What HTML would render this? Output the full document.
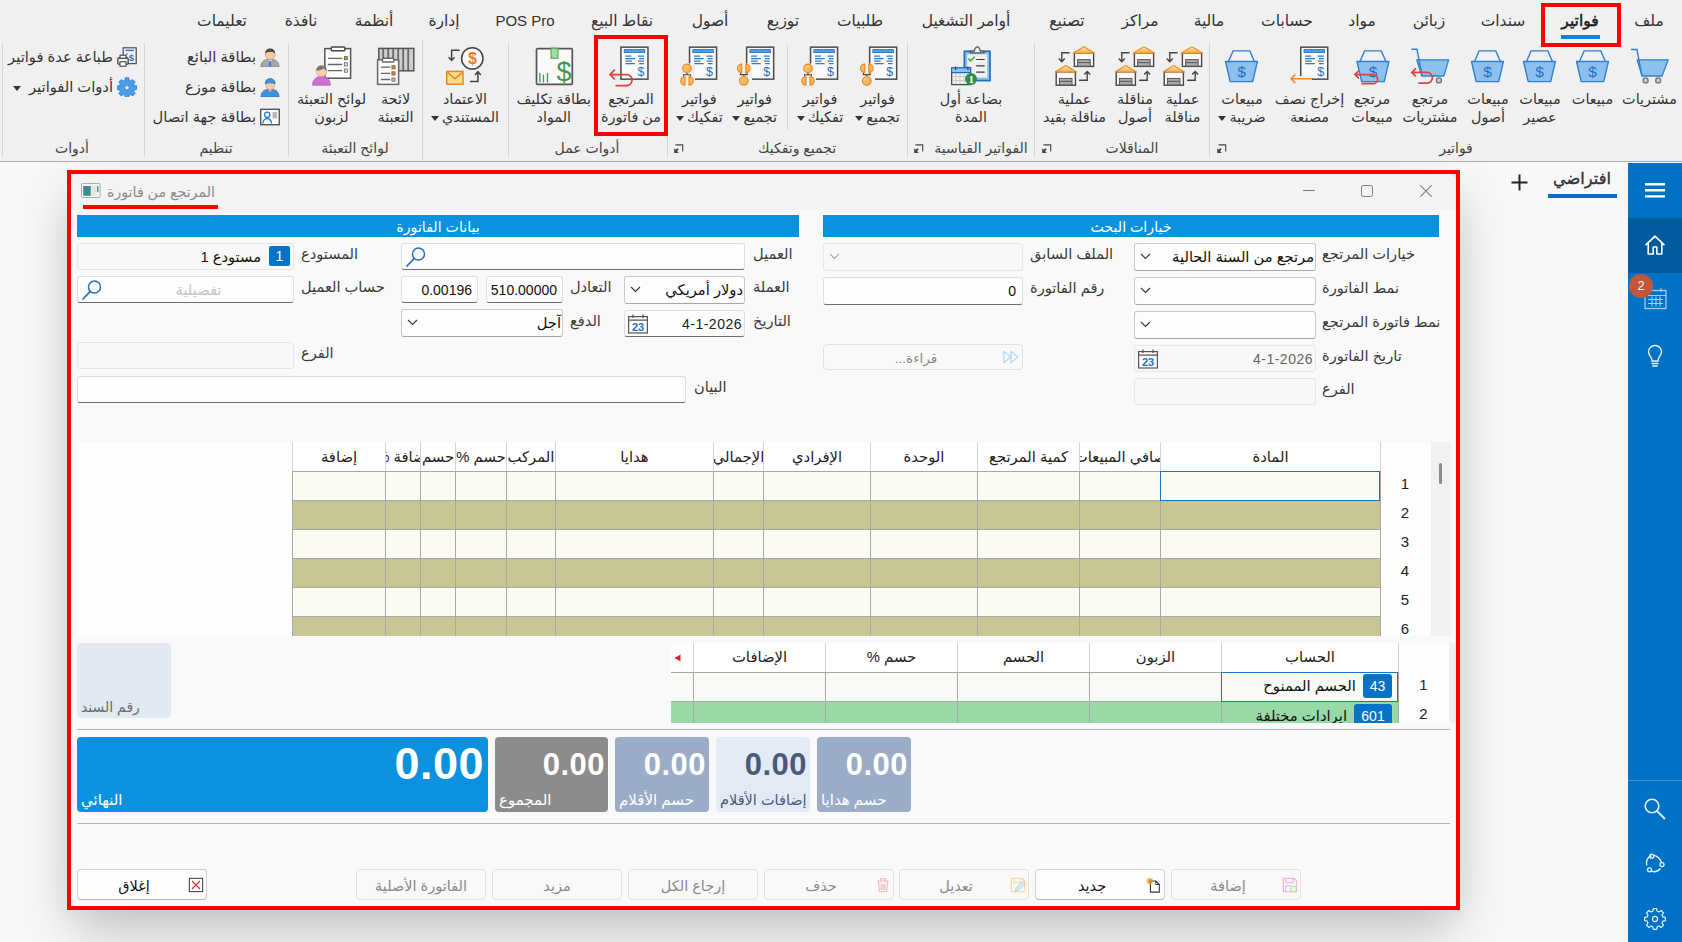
<!DOCTYPE html>
<html lang="ar">
<head>
<meta charset="utf-8">
<title>المرتجع من فاتورة</title>
<style>
*{box-sizing:border-box;margin:0;padding:0}
html,body{width:1682px;height:942px;overflow:hidden}
body{position:relative;background:#f8f8f8;font-family:"Liberation Sans","DejaVu Sans",sans-serif;font-size:14px;color:#2b2b2b}
.abs{position:absolute}
/* ===== ribbon ===== */
#ribbon{z-index:5;position:absolute;left:0;top:0;width:1682px;height:162px;background:#f0f0f0;border-bottom:1px solid #adadad}
.tab{position:absolute;top:10px;width:120px;margin-left:-60px;text-align:center;font-size:15.5px;line-height:22px;color:#333;white-space:nowrap}
.tab .lat{font-size:15px}
.tab.act{color:#1c1c1c;-webkit-text-stroke:.5px #1c1c1c}
#tabul{position:absolute;left:1561px;top:35px;width:39px;height:4px;background:#1b7fd6}
.redbox{z-index:2;position:absolute;border:4px solid #ff0000}
.gsep{position:absolute;top:43px;width:1px;height:114px;background:#d4d4d4}
.glabel{position:absolute;top:138px;width:160px;margin-left:-80px;text-align:center;font-size:14px;line-height:20px;color:#444;white-space:nowrap}
.launch{position:absolute;top:144px;width:10px;height:10px}
.big{position:absolute;top:46px;width:120px;margin-left:-60px;text-align:center;white-space:nowrap}
.big svg{display:block;margin:0 auto;width:40px;height:40px}
.big .l{display:block;font-size:14.400px;line-height:18px;color:#333;margin-top:0}
.big .l1{margin-top:4px}
.dd{display:inline-block;width:0;height:0;border-left:4px solid transparent;border-right:4px solid transparent;border-top:5px solid #333;vertical-align:middle;margin-right:3px}
.sm{position:absolute;height:24px;white-space:nowrap;font-size:14.700px;line-height:24px;color:#333;direction:rtl}
.sm svg{position:absolute;right:0;top:2px;width:20px;height:20px}
.sm span{position:absolute;right:24px;top:0px}
/* ===== sidebar ===== */
#side{z-index:5;position:absolute;left:1628px;top:163px;width:54px;height:779px;background:#0072c6}
#side .home{position:absolute;left:0;top:55px;width:54px;height:55px;background:#005a9e}
#side svg{position:absolute}
/* ===== dialog ===== */
#dlgred{position:absolute;left:67px;top:170px;width:1393px;height:740px;border:4px solid #ff0000;background:#dedede;box-shadow:0 22px 50px -6px rgba(0,0,0,.26)}
#dlg{position:absolute;left:71px;top:174px;width:1385px;height:732px;background:#f9f9f9;border-radius:8px 8px 0 0;overflow:hidden}
#dlg .tbar{position:absolute;left:0;top:0;width:100%;height:36px;background:#f3f3f3}
.d{position:absolute}
.bar{position:absolute;height:22px;background:#0a92de;color:#fff;text-align:center;font-size:14.200px;line-height:25px;overflow:hidden}
.lbl{position:absolute;font-size:14.600px;line-height:20px;color:#3a3a3a;white-space:nowrap;direction:rtl;text-align:left}
.fld{position:absolute;height:27px;border:1px solid #d9d9d9;border-bottom-color:#8a8a8a;border-radius:3px;background:#fdfdfd;font-size:14.700px;line-height:25px;color:#111;white-space:nowrap;overflow:hidden}
.fld.dis{background:#f8f8f8;border-color:#e6e6e6;color:#666}
.fld.cmb{border-color:#c9c9c9;border-bottom-color:#a5a5a5}
.fld .tx{position:absolute;right:1px;top:1px;direction:rtl}
.chev{position:absolute;left:5px;top:9px;width:11px;height:7px}
.fld.inp{border-color:#dedede;border-bottom:1.500px solid #6e6e6e}
.num{font-size:14px}
/* grid */
.grid{position:absolute;background:#fdfdfd;overflow:hidden}
.gh{position:absolute;top:0;height:29px;font-size:14.800px;line-height:30px;color:#222;white-space:nowrap;overflow:hidden;border-left:1px solid #d4d4d4;background:#fff;display:flex;justify-content:center;direction:rtl}
.gh span{flex:none}
.rn{position:absolute;width:50px;text-align:center;font-size:15px;line-height:26px;color:#222}
/* cards */
.card{position:absolute;top:563px;height:75px;border-radius:4px;color:#fff;overflow:hidden}
.card .v{position:absolute;right:3px;top:9px;font-weight:bold;font-size:31px;line-height:38px;letter-spacing:.5px}
.card .t{position:absolute;left:4px;bottom:2px;font-size:15px;line-height:20px;white-space:nowrap;direction:rtl}
/* buttons */
.btn{position:absolute;top:695px;width:130px;height:31px;border:1px solid #e2e2e2;border-radius:4px;background:#f9f9f9;color:#8a8a8a;font-size:14.500px;line-height:32px;text-align:center;white-space:nowrap}
.btn.en{background:#fefefe;border-color:#cfcfcf;border-bottom-color:#b5b5b5;color:#111}
.btn svg{position:absolute;right:2px;top:7px;width:16px;height:16px}
.acc{position:absolute;height:25px;white-space:nowrap;direction:rtl;font-size:14.800px;line-height:24px;color:#111}
.acc b{display:inline-block;height:24px;background:#0672c8;color:#fff;font-weight:normal;text-align:center;border-radius:3px;line-height:24px;margin-left:7px;font-size:14px}
</style>
</head>
<body>
<svg width="0" height="0" style="position:absolute;left:-10px;top:-10px">
<defs>
<linearGradient id="gRoof" x1="0" y1="0" x2="0" y2="1"><stop offset="0" stop-color="#fde0ae"/><stop offset="1" stop-color="#f7ae4a"/></linearGradient>
<linearGradient id="gOr" x1="0" y1="0" x2="1" y2="1"><stop offset="0" stop-color="#fbd38a"/><stop offset="1" stop-color="#f3a43a"/></linearGradient>
<!-- document body reused -->
<g id="docbody">
<rect x="0.75" y="0.75" width="27" height="32" fill="#fafafa" stroke="#4a4a4a" stroke-width="1.5"/>
<rect x="4" y="3.2" width="20.6" height="3" fill="#4e9be6" stroke="#1f6fc4" stroke-width=".8"/>
<path d="M5.2 9.7h6M5.2 12.3h9.6M5.2 14.8h6.6M5.2 17.3h9.6M17.8 9.7h6M19 12.3h4.8M17.8 14.8h6M19 17.3h4.8" stroke="#2a78cc" stroke-width="1.3" fill="none"/>
<text x="20.8" y="30" font-size="12.5" text-anchor="middle" fill="#1f6fc4" font-family="Liberation Sans,sans-serif">$</text>
</g>
<g id="wh1">
<rect x="1.2" y="7" width="19.2" height="13.4" fill="#fff" stroke="#444" stroke-width="1.4"/>
<rect x="4.4" y="13.6" width="12.6" height="6.6" fill="#a9a9a9" stroke="#555" stroke-width="1"/>
<path d="M4.8 16.6h11.8" stroke="#666" stroke-width="1.2"/>
<path d="M0 7.2L10.8.6l10.8 6.6z" fill="url(#gRoof)" stroke="#e8871e" stroke-width="1.1" stroke-linejoin="round"/>
</g>
<g id="half">
<path d="M0 -4.3A4.3 4.3 0 0 0 0 4.3z" fill="url(#gOr)" stroke="#e8871e" stroke-width="1.1"/>
</g>
</defs>
<symbol id="i-cart" viewBox="0 0 40 40">
<path d="M7.2 13.8h31L32 30H12z" fill="#8ec0ee" stroke="#2f80d0" stroke-width="1.3" stroke-linejoin="round"/>
<path d="M1 3.5h5.9L12 30" fill="none" stroke="#2f80d0" stroke-width="1.4"/>
<circle cx="15.6" cy="34.4" r="2.5" fill="#cfcfcf" stroke="#777" stroke-width="1.4"/>
<circle cx="28.2" cy="34.4" r="2.5" fill="#cfcfcf" stroke="#777" stroke-width="1.4"/>
</symbol>
<symbol id="i-basket" viewBox="0 0 40 40">
<path d="M6.5 15.5L11.1 4.9h16.7l4.6 10.6" fill="none" stroke="#2f80d0" stroke-width="1.4"/>
<path d="M3.5 15.5h31.9l-4.7 20.1H8.2z" fill="#8ec0ee" stroke="#2f80d0" stroke-width="1.4" stroke-linejoin="round"/>
<text x="19.6" y="31.3" font-size="15.5" text-anchor="middle" fill="#1f6fc4" font-family="Liberation Sans,sans-serif">$</text>
</symbol>
<symbol id="i-retcart" viewBox="0 0 40 40">
<path d="M6.8 13.8h31.8L33.9 30H11.8z" fill="#8ec0ee" stroke="#2f80d0" stroke-width="1.3" stroke-linejoin="round"/>
<path d="M1.4 3.3H7L12 30" fill="none" stroke="#2f80d0" stroke-width="1.4"/>
<circle cx="28.9" cy="34.4" r="2.5" fill="#cfcfcf" stroke="#777" stroke-width="1.4"/>
<path d="M8.4 37.2H17a5.4 5.4 0 0 0 0-10.8H2.2M6 22.3l-4.2 4.1L6 30.5" fill="none" stroke="#d9453a" stroke-width="1.700"/>
</symbol>
<symbol id="i-retbasket" viewBox="0 0 40 40">
<path d="M8 15.5l4.6-10.6h16.7l4.6 10.6" fill="none" stroke="#2f80d0" stroke-width="1.4"/>
<path d="M5 15.5h31.9l-4.7 20.1H9.7z" fill="#8ec0ee" stroke="#2f80d0" stroke-width="1.4" stroke-linejoin="round"/>
<text x="21.1" y="31.3" font-size="15.5" text-anchor="middle" fill="#1f6fc4" font-family="Liberation Sans,sans-serif">$</text>
<path d="M9.6 37.7H21a4.55 4.55 0 0 0 0-9.1H3.4M7 24.5l-4.1 4.1L7 32.7" fill="none" stroke="#d9453a" stroke-width="1.700"/>
</symbol>
<symbol id="i-docout" viewBox="0 0 40 40">
<use href="#docbody" x="10" y="0.4"/>
<rect x="9" y="30" width="13" height="6" fill="#f0f0f0"/>
<path d="M22 32.8H1.2M5.2 28.6L1 32.8l4.2 4.2" fill="none" stroke="#e8892b" stroke-width="1.5"/>
</symbol>
<symbol id="i-docret" viewBox="0 0 40 40" overflow="visible">
<use href="#docbody" x="9.2" y="0.4"/>
<path d="M4.5 39.6H15.6a5.5 5.5 0 0 0 0-11H-0.8M3.9 23.7l-4.9 4.9 4.9 4.9" fill="none" stroke="#d9453a" stroke-width="1.700"/>
</symbol>
<symbol id="i-docasm" viewBox="0 0 40 40">
<use href="#docbody" x="10.9" y="0.4"/>
<rect x="0" y="17.500" width="17" height="22.500" fill="#f0f0f0"/>
<path d="M5.4 27v1.6h6.8V27M8.8 28.6v2" fill="none" stroke="#444" stroke-width="1.1"/>
<use href="#half" x="6.8" y="22.4"/>
<use href="#half" transform="translate(10.8 22.4) scale(-1 1)"/>
<circle cx="8.8" cy="35" r="4.3" fill="url(#gOr)" stroke="#e8871e" stroke-width="1.1"/>
</symbol>
<symbol id="i-docdis" viewBox="0 0 40 40">
<use href="#docbody" x="9.8" y="0.4"/>
<rect x="0" y="17.500" width="16" height="22.500" fill="#f0f0f0"/>
<path d="M4.5 30.5v-1.8h7v1.8M8 28.7v-2" fill="none" stroke="#444" stroke-width="1.1"/>
<circle cx="8" cy="22.4" r="4.3" fill="url(#gOr)" stroke="#e8871e" stroke-width="1.1"/>
<use href="#half" x="6" y="35"/>
<use href="#half" transform="translate(10 35) scale(-1 1)"/>
</symbol>
<symbol id="i-wh" viewBox="0 0 40 40">
<use href="#wh1" x="18.2" y="0"/>
<use href="#wh1" x="0" y="18.8"/>
<path d="M14.6 6.8H6.8v8.6M3.8 12.6l3 3.2 3-3.2" fill="none" stroke="#444" stroke-width="1.4"/>
<path d="M24 34.2h8.2v-8.4M29.2 28.6l3-3.2 3 3.2" fill="none" stroke="#444" stroke-width="1.4"/>
</symbol>
<symbol id="i-clipcal" viewBox="0 0 40 40">
<rect x="13.4" y="5.3" width="25.6" height="29.3" fill="#8cc1ee" stroke="#1a6fc4" stroke-width="1.7"/>
<rect x="16.2" y="8.3" width="20" height="23.3" fill="#f1f1f1"/>
<path d="M19.6 6.8v-1.6h3.6c.6-2.600 1.600-4.300 3.100-4.300s2.500 1.700 3.100 4.300h3.600v1.600z" fill="#f6f6f6" stroke="#555" stroke-width="1.3" stroke-linejoin="round"/>
<path d="M17.4 12.4l2.100 2.500 4.300-4" fill="none" stroke="#4aa657" stroke-width="1.6"/>
<path d="M25.200 13.500h8.500M25.200 19.900h8.500M25.200 26.100h8.500" stroke="#3c3c3c" stroke-width="1.200"/>
<rect x="0.700" y="22" width="18.800" height="16.600" fill="#f3f3f3" stroke="#4a4a4a" stroke-width="1.300"/>
<path d="M1.500 30.500h17M1.500 34.500h17M5 27v11M9 27v11M13 27v11" stroke="#c9c9c9" stroke-width="1"/>
<rect x="0.600" y="21.800" width="19" height="4.800" fill="#8cc1ee" stroke="#1a6fc4" stroke-width="1.200"/>
<path d="M4.600 20.400v3.600M16.900 20.400v3.600" stroke="#444" stroke-width="1.300"/>
<circle cx="20" cy="32.900" r="6" fill="#2f9147"/>
<text x="20.300" y="37" font-size="11" font-weight="bold" text-anchor="middle" fill="#fff" font-family="Liberation Serif,serif">1</text>
</symbol>
<symbol id="i-cost" viewBox="0 0 40 40">
<rect x="2.500" y="2.700" width="35.800" height="35.600" rx="1" fill="#fafafa" stroke="#555" stroke-width="1.700"/>
<rect x="17" y="2.200" width="7" height="10" fill="#a5dba8" stroke="#4aa657" stroke-width="1.100"/>
<path d="M5.900 27v9.400M9.500 28.800v7.600M13.500 27v9.400" stroke="#3a9a4d" stroke-width="1.300"/>
<text x="30.100" y="34.500" font-size="27" text-anchor="middle" fill="#3a9a4d" font-family="Liberation Sans,sans-serif">$</text>
</symbol>
<symbol id="i-credit" viewBox="0 0 40 40">
<circle cx="27.300" cy="12.400" r="10.700" fill="#fafafa" stroke="#444" stroke-width="1.500"/>
<text x="27.400" y="18.200" font-size="16" font-weight="bold" text-anchor="middle" fill="#e8802a" font-family="Liberation Sans,sans-serif">$</text>
<path d="M14.700 4.200H6.600v9.600M3.600 11.200l3 3.300 3-3.300" fill="none" stroke="#444" stroke-width="1.500"/>
<rect x="1.700" y="25.400" width="16.300" height="12.800" fill="#fbdc8e" stroke="#e8871e" stroke-width="1.500"/>
<path d="M2.500 26.400l7.400 6.400 7.400-6.400" fill="none" stroke="#e8871e" stroke-width="1.500"/>
<path d="M25 35.600h7.900v-9.400M29.900 29l3-3.300 3 3.300" fill="none" stroke="#444" stroke-width="1.500"/>
</symbol>
<symbol id="i-pack" viewBox="0 0 40 40">
<rect x="2.800" y="2.400" width="35" height="22.400" fill="#cfcfcf" stroke="#555" stroke-width="1.500"/>
<path d="M7.200 3v21M12.200 3v21M17.200 3v21M22.200 3v21M27.200 3v21M32.200 3v21" stroke="#6a6a6a" stroke-width="1.800"/>
<rect x="1.600" y="13.800" width="21" height="24.600" fill="#fdfdfd" stroke="#666" stroke-width="1.500"/>
<rect x="6.400" y="12.200" width="11.400" height="3.800" rx=".8" fill="#fdfdfd" stroke="#666" stroke-width="1.400"/>
<path d="M4.900 21.200h9.300M4.900 27.300h9.300M4.900 33.500h9.300" stroke="#666" stroke-width="1.300"/>
<rect x="15.900" y="19.700" width="3.200" height="3.200" fill="#e8871e" stroke="#555" stroke-width=".7"/>
<rect x="15.900" y="25.800" width="3.200" height="3.200" fill="#e8871e" stroke="#555" stroke-width=".7"/>
<rect x="15.900" y="32" width="3.200" height="3.200" fill="#bbb" stroke="#555" stroke-width=".7"/>
</symbol>
<symbol id="i-packcust" viewBox="0 0 40 40">
<rect x="12.800" y="2.600" width="25.800" height="29.600" fill="#fcfcfc" stroke="#555" stroke-width="1.500"/>
<rect x="19.200" y="1" width="13.600" height="3.800" rx=".8" fill="#fcfcfc" stroke="#444" stroke-width="1.400"/>
<path d="M15.900 12.300h14.300M15.900 18.500h14.300M15.900 24.600h14.300" stroke="#666" stroke-width="1.300"/>
<rect x="32.300" y="10.500" width="3" height="3.200" fill="#e8871e" stroke="#555" stroke-width=".7"/>
<rect x="32.300" y="16.800" width="3" height="3.200" fill="#ddd" stroke="#555" stroke-width=".7"/>
<rect x="32.300" y="23" width="3" height="3.200" fill="#ddd" stroke="#555" stroke-width=".7"/>
<path d="M.6 39.200c0-5 3.400-8.400 6.600-8.400h4.600c3.200 0 6.600 3.400 6.600 8.400z" fill="#c873d2" stroke="#b35fc0" stroke-width=".8"/>
<circle cx="9.500" cy="25.300" r="5.300" fill="#fbd0a8" stroke="#d99b6c" stroke-width=".7"/>
<path d="M4.300 24.600c0-3.400 2.300-5.200 5.200-5.200s5.200 1.800 5.200 5.200c-1.500-.3-2.300-1.200-2.900-2.400-1.500 1.600-4.500 2.400-7.500 2.400z" fill="#777"/>
</symbol>
<symbol id="i-seller" viewBox="0 0 20 20">
<path d="M1 20c0-4.500 2.600-7 6-7.400h6c3.400.4 6 2.900 6 7.400z" fill="#a9a9a9" stroke="#7b7b7b" stroke-width=".8"/>
<path d="M8 12.800l2 2.600 2-2.600z" fill="#fff"/><path d="M9.300 13.400h1.400l.9 5.400L10 20l-1.600-1.200z" fill="#3b86d3"/>
<circle cx="10.200" cy="7.600" r="4.800" fill="#f6c9a4" stroke="#cf9468" stroke-width=".6"/>
<path d="M5.200 7c0-3.600 2.200-5.400 5-5.400s5 1.800 5 5.400c-1.200-1.500-2.400-2.200-5-2.200S6.400 5.500 5.200 7z" fill="#4a4a4a"/>
</symbol>
<symbol id="i-distrib" viewBox="0 0 20 20">
<path d="M1 20c0-4.500 2.600-7 6-7.400h6c3.400.4 6 2.900 6 7.400z" fill="#3f90de" stroke="#2772c2" stroke-width=".8"/>
<path d="M8 12.800l2 2.200 2-2.200z" fill="#f6c9a4"/>
<circle cx="10.200" cy="8.200" r="4.500" fill="#f6c9a4" stroke="#cf9468" stroke-width=".6"/>
<path d="M5.200 6.800c0-3.300 2.200-5.200 5-5.200s5 1.900 5 5.200c-1.600-.7-3.200-1-5-1s-3.400.3-5 1z" fill="#3f90de" stroke="#2772c2" stroke-width=".7"/>
</symbol>
<symbol id="i-contact" viewBox="0 0 20 20">
<rect x=".7" y="2.300" width="18.600" height="15.400" fill="#fdfdfd" stroke="#555" stroke-width="1.400"/>
<rect x="12.500" y="5" width="4.600" height="6.400" fill="#b9b9b9"/>
<circle cx="7.200" cy="7.800" r="2.700" fill="none" stroke="#2a78cc" stroke-width="1.300"/>
<path d="M2.800 16.500c.4-3.200 2-4.900 4.400-4.900s4 1.700 4.400 4.900" fill="none" stroke="#2a78cc" stroke-width="1.300"/>
</symbol>
<symbol id="i-print" viewBox="0 0 20 20">
<rect x="6.200" y=".8" width="13" height="15.800" fill="#fafafa" stroke="#555" stroke-width="1.300"/>
<path d="M8.400 3.400h8.600" stroke="#2a78cc" stroke-width="1.500"/>
<path d="M8.600 7h2.400M8.600 9.400h1.600" stroke="#2a78cc" stroke-width="1"/>
<text x="14.400" y="14" font-size="9.500" font-weight="bold" text-anchor="middle" fill="#1f6fc4" font-family="Liberation Sans,sans-serif">$</text>
<rect x=".8" y="11" width="10.400" height="6.200" rx="1" fill="#f1f1f1" stroke="#444" stroke-width="1.300"/>
<rect x="3" y="8.200" width="6" height="3" fill="#fff" stroke="#444" stroke-width="1.100"/>
<rect x="3" y="14.800" width="6" height="4.400" fill="#fff" stroke="#444" stroke-width="1.100"/>
</symbol>
<symbol id="i-gear" viewBox="0 0 20 20">
<path fill="#4b9be6" stroke="#2b7bd0" stroke-width=".8" stroke-linejoin="round" d="M8.300.8h3.400l.5 2.500 1.500.6 2.100-1.400 2.400 2.400-1.400 2.100.6 1.500 2.500.5v3.400l-2.500.5-.6 1.500 1.400 2.100-2.400 2.400-2.100-1.400-1.500.6-.5 2.500H8.300l-.5-2.500-1.500-.6-2.100 1.400-2.400-2.400 1.400-2.100-.6-1.500-2.500-.5V9l2.500-.5.600-1.500-1.400-2.100 2.400-2.400 2.100 1.400 1.500-.6z"/>
<circle cx="10" cy="10.700" r="2.200" fill="#f0f0f0" stroke="#2b7bd0" stroke-width=".8"/>
</symbol>
</svg>

<!-- RIBBON -->
<div id="ribbon">
<div class="tab" style="left:1649px">ملف</div>
<div class="tab act" style="left:1580px">فواتير</div>
<div class="tab" style="left:1503px">سندات</div>
<div class="tab" style="left:1429px">زبائن</div>
<div class="tab" style="left:1362px">مواد</div>
<div class="tab" style="left:1287px">حسابات</div>
<div class="tab" style="left:1209px">مالية</div>
<div class="tab" style="left:1140px">مراكز</div>
<div class="tab" style="left:1067px">تصنيع</div>
<div class="tab" style="left:966px">أوامر التشغيل</div>
<div class="tab" style="left:860px">طلبيات</div>
<div class="tab" style="left:783px">توزيع</div>
<div class="tab" style="left:710px">أصول</div>
<div class="tab" style="left:622px">نقاط البيع</div>
<div class="tab" style="left:525px"><span class="lat">POS Pro</span></div>
<div class="tab" style="left:444px">إدارة</div>
<div class="tab" style="left:374px">أنظمة</div>
<div class="tab" style="left:301px">نافذة</div>
<div class="tab" style="left:222px">تعليمات</div>
<div id="tabul"></div>
<div class="redbox" style="left:1541px;top:3px;width:80px;height:44px"></div>
<div class="redbox" style="left:594px;top:35px;width:74px;height:101px"></div>
<div class="gsep" style="left:2px;top:43px;height:114px"></div>
<div class="gsep" style="left:144px;top:43px;height:114px"></div>
<div class="gsep" style="left:288px;top:43px;height:114px"></div>
<div class="gsep" style="left:422px;top:39px;height:122px"></div>
<div class="gsep" style="left:508px;top:43px;height:114px"></div>
<div class="gsep" style="left:667px;top:43px;height:114px"></div>
<div class="gsep" style="left:787px;top:45px;height:85px"></div>
<div class="gsep" style="left:907px;top:43px;height:114px"></div>
<div class="gsep" style="left:1034px;top:43px;height:114px"></div>
<div class="gsep" style="left:1209px;top:43px;height:114px"></div>
<div class="glabel" style="left:1456px">فواتير</div>
<div class="glabel" style="left:1132px">المناقلات</div>
<div class="glabel" style="left:981px">الفواتير القياسية</div>
<div class="glabel" style="left:797px">تجميع وتفكيك</div>
<div class="glabel" style="left:587px">أدوات عمل</div>
<div class="glabel" style="left:355px">لوائح التعبئة</div>
<div class="glabel" style="left:216px">تنظيم</div>
<div class="glabel" style="left:72px">أدوات</div>
<svg class="launch" style="left:1217px" viewBox="0 0 10 10"><path d="M1.500.9h7.200v6.700" fill="none" stroke="#444" stroke-width="1.100"/><path d="M.2 9V4.300l1.500 1.500 1.700-1.700 1.300 1.300-1.700 1.700L4.800 9z" fill="#444"/></svg>
<svg class="launch" style="left:1042px" viewBox="0 0 10 10"><path d="M1.500.9h7.200v6.700" fill="none" stroke="#444" stroke-width="1.100"/><path d="M.2 9V4.300l1.500 1.500 1.700-1.700 1.300 1.300-1.700 1.700L4.800 9z" fill="#444"/></svg>
<svg class="launch" style="left:914px" viewBox="0 0 10 10"><path d="M1.500.9h7.200v6.700" fill="none" stroke="#444" stroke-width="1.100"/><path d="M.2 9V4.300l1.500 1.500 1.700-1.700 1.300 1.300-1.700 1.700L4.800 9z" fill="#444"/></svg>
<svg class="launch" style="left:674px" viewBox="0 0 10 10"><path d="M1.500.9h7.200v6.700" fill="none" stroke="#444" stroke-width="1.100"/><path d="M.2 9V4.300l1.500 1.500 1.700-1.700 1.300 1.300-1.700 1.700L4.800 9z" fill="#444"/></svg>
<div class="big" style="left:1649.5px"><svg viewBox="0 0 40 40" overflow="visible"><use href="#i-cart"/></svg><span class="l l1">مشتريات</span></div>
<div class="big" style="left:1592.5px"><svg viewBox="0 0 40 40" overflow="visible"><use href="#i-basket"/></svg><span class="l l1">مبيعات</span></div>
<div class="big" style="left:1540px"><svg viewBox="0 0 40 40" overflow="visible"><use href="#i-basket"/></svg><span class="l l1">مبيعات</span><span class="l" dir="rtl">عصير</span></div>
<div class="big" style="left:1488px"><svg viewBox="0 0 40 40" overflow="visible"><use href="#i-basket"/></svg><span class="l l1">مبيعات</span><span class="l" dir="rtl">أصول</span></div>
<div class="big" style="left:1430px"><svg viewBox="0 0 40 40" overflow="visible"><use href="#i-retcart"/></svg><span class="l l1">مرتجع</span><span class="l" dir="rtl">مشتريات</span></div>
<div class="big" style="left:1372px"><svg viewBox="0 0 40 40" overflow="visible"><use href="#i-retbasket"/></svg><span class="l l1">مرتجع</span><span class="l" dir="rtl">مبيعات</span></div>
<div class="big" style="left:1309.5px"><svg viewBox="0 0 40 40" overflow="visible"><use href="#i-docout"/></svg><span class="l l1">إخراج نصف</span><span class="l" dir="rtl">مصنعة</span></div>
<div class="big" style="left:1242px"><svg viewBox="0 0 40 40" overflow="visible"><use href="#i-basket"/></svg><span class="l l1">مبيعات</span><span class="l" dir="rtl">ضريبة<i class="dd"></i></span></div>
<div class="big" style="left:1182.5px"><svg viewBox="0 0 40 40" overflow="visible"><use href="#i-wh"/></svg><span class="l l1">عملية</span><span class="l" dir="rtl">مناقلة</span></div>
<div class="big" style="left:1135px"><svg viewBox="0 0 40 40" overflow="visible"><use href="#i-wh"/></svg><span class="l l1">مناقلة</span><span class="l" dir="rtl">أصول</span></div>
<div class="big" style="left:1074.5px"><svg viewBox="0 0 40 40" overflow="visible"><use href="#i-wh"/></svg><span class="l l1">عملية</span><span class="l" dir="rtl">مناقلة بقيد</span></div>
<div class="big" style="left:971px"><svg viewBox="0 0 40 40" overflow="visible"><use href="#i-clipcal"/></svg><span class="l l1">بضاعة أول</span><span class="l" dir="rtl">المدة</span></div>
<div class="big" style="left:877.5px"><svg viewBox="0 0 40 40" overflow="visible"><use href="#i-docasm"/></svg><span class="l l1">فواتير</span><span class="l" dir="rtl">تجميع<i class="dd"></i></span></div>
<div class="big" style="left:820px"><svg viewBox="0 0 40 40" overflow="visible"><use href="#i-docdis"/></svg><span class="l l1">فواتير</span><span class="l" dir="rtl">تفكيك<i class="dd"></i></span></div>
<div class="big" style="left:754.7px"><svg viewBox="0 0 40 40" overflow="visible"><use href="#i-docasm"/></svg><span class="l l1">فواتير</span><span class="l" dir="rtl">تجميع<i class="dd"></i></span></div>
<div class="big" style="left:699.4px"><svg viewBox="0 0 40 40" overflow="visible"><use href="#i-docdis"/></svg><span class="l l1">فواتير</span><span class="l" dir="rtl">تفكيك<i class="dd"></i></span></div>
<div class="big" style="left:631px"><svg viewBox="0 0 40 40" overflow="visible"><use href="#i-docret"/></svg><span class="l l1">المرتجع</span><span class="l" dir="rtl">من فاتورة</span></div>
<div class="big" style="left:553.75px"><svg viewBox="0 0 40 40" overflow="visible"><use href="#i-cost"/></svg><span class="l l1">بطاقة تكليف</span><span class="l" dir="rtl">المواد</span></div>
<div class="big" style="left:465px"><svg viewBox="0 0 40 40" overflow="visible"><use href="#i-credit"/></svg><span class="l l1">الاعتماد</span><span class="l" dir="rtl">المستندي<i class="dd"></i></span></div>
<div class="big" style="left:395.5px"><svg viewBox="0 0 40 40" overflow="visible"><use href="#i-pack"/></svg><span class="l l1">لائحة</span><span class="l" dir="rtl">التعبئة</span></div>
<div class="big" style="left:331.5px"><svg viewBox="0 0 40 40" overflow="visible"><use href="#i-packcust"/></svg><span class="l l1">لوائح التعبئة</span><span class="l" dir="rtl">لزبون</span></div>
<div class="sm" style="left:60px;top:45px;width:220px"><svg viewBox="0 0 20 20"><use href="#i-seller"/></svg><span>بطاقة البائع</span></div>
<div class="sm" style="left:60px;top:75px;width:220px"><svg viewBox="0 0 20 20"><use href="#i-distrib"/></svg><span>بطاقة موزع</span></div>
<div class="sm" style="left:60px;top:105px;width:220px"><svg viewBox="0 0 20 20"><use href="#i-contact"/></svg><span>بطاقة جهة اتصال</span></div>
<div class="sm" style="left:-83px;top:45px;width:220px"><svg viewBox="0 0 20 20"><use href="#i-print"/></svg><span>طباعة عدة فواتير</span></div>
<div class="sm" style="left:-83px;top:75px;width:220px"><svg viewBox="0 0 20 20"><use href="#i-gear"/></svg><span>أدوات الفواتير<i class="dd" style="margin-right:8px"></i></span></div>
</div>

<!-- SIDEBAR -->
<div id="side"><div class="home"></div>
<svg style="left:17px;top:20px" width="20" height="16" viewBox="0 0 20 16"><path d="M0 1.200h20M0 7.300h20M0 13.400h20" stroke="#fff" stroke-width="2.400"/></svg>
<svg style="left:15px;top:70px" width="24" height="24" viewBox="0 0 24 24"><path d="M2.500 12.200L12 3.200l9.500 9M5.200 10v11h5v-7h3.600v7h5V10" fill="none" stroke="#fff" stroke-width="1.600" stroke-linejoin="round"/></svg>
<svg style="left:16px;top:124px" width="23" height="23" viewBox="0 0 23 23"><rect x="1" y="3.500" width="21" height="18" fill="none" stroke="#a8cdec" stroke-width="1.300"/><path d="M1 8.500h21M6 1v4M17 1v4M4 12.500h15M4 16.500h15M8 9.500v10M12 9.500v10M16 9.500v10" stroke="#a8cdec" stroke-width="1.100" fill="none"/></svg>
<div style="position:absolute;left:1px;top:111px;width:24px;height:24px;border-radius:12px;background:#c0563c;color:#fff;font-size:12px;line-height:24px;text-align:center">2</div>
<svg style="left:17px;top:180.500px" width="20" height="26" viewBox="0 0 20 26"><path d="M10 1.500c-4 0-6.500 3-6.500 6.300 0 2.400 1.300 3.900 2.400 5.500.8 1.200 1.100 2.300 1.100 3.700h6c0-1.400.3-2.500 1.100-3.700 1.100-1.600 2.400-3.100 2.400-5.500 0-3.300-2.500-6.300-6.500-6.300zM7 19.500h6M7.800 22h4.400" fill="none" stroke="#e6f1fb" stroke-width="1.400" stroke-linecap="round"/></svg>
<div style="position:absolute;left:0;top:617px;width:54px;height:1px;background:#3a92d6"></div>
<svg style="left:14px;top:633px" width="26" height="26" viewBox="0 0 26 26"><circle cx="10" cy="10" r="6.800" fill="none" stroke="#e6f1fb" stroke-width="1.600"/><path d="M15 15l8 8" stroke="#e6f1fb" stroke-width="1.800"/></svg>
<svg style="left:14px;top:688px" width="26" height="26" viewBox="0 0 26 26"><path d="M9.500 4.600C5.500 6 3.600 10.200 4.700 14.300M8.600 19.800c3.600 1.500 7.600.6 9.800-2.300M19.500 11.500C18.500 7.500 14.600 4.500 11.200 4.300" fill="none" stroke="#e6f1fb" stroke-width="1.400"/><circle cx="9.700" cy="5.200" r="2" fill="none" stroke="#e6f1fb" stroke-width="1.300"/><circle cx="7.500" cy="18.800" r="2" fill="none" stroke="#e6f1fb" stroke-width="1.300"/><circle cx="20" cy="13.600" r="2" fill="none" stroke="#e6f1fb" stroke-width="1.300"/></svg>
<svg style="left:15.800px;top:744.800px" width="22" height="22" viewBox="0 0 20 20"><path fill="none" stroke="#e6f1fb" stroke-width="1.100" stroke-linejoin="round" d="M8.500 1.500h3l.5 2.300 1.600.7 2-1.300 2.100 2.100-1.300 2 .7 1.600 2.300.5v3l-2.300.5-.7 1.600 1.300 2-2.100 2.100-2-1.300-1.600.7-.5 2.300h-3l-.5-2.300-1.600-.7-2 1.300-2.100-2.100 1.300-2-.7-1.600-2.300-.5v-3l2.300-.5.7-1.600-1.300-2 2.100-2.100 2 1.300 1.600-.7z" transform="translate(0 -.9)"/><circle cx="10" cy="10" r="2.300" fill="none" stroke="#e6f1fb" stroke-width="1.100"/></svg>
</div>
<!-- workspace tab -->
<div class="abs" style="left:1540px;top:166px;width:84px;text-align:center;font-size:16.300px;line-height:24px;color:#333;-webkit-text-stroke:.35px #333">افتراضي</div>
<div class="abs" style="left:1548px;top:194px;width:69px;height:4px;background:#0a6ccd"></div>
<svg class="abs" style="left:1511px;top:174px" width="17" height="17" viewBox="0 0 17 17"><path d="M8.500 0.500v16M0.500 8.500h16" stroke="#222" stroke-width="2"/></svg>

<!-- DIALOG -->
<div id="dlgred"></div>
<div id="dlg">
<div class="tbar"></div>
<svg class="d" style="left:10px;top:9px" width="20" height="15" viewBox="0 0 20 15"><defs><linearGradient id="gTi" x1="0" y1="0" x2="1" y2="1"><stop offset="0" stop-color="#3f7fb8"/><stop offset="1" stop-color="#3d9a5c"/></linearGradient></defs><rect x=".5" y=".5" width="18.500" height="14" rx="1" fill="#f4f4f4" stroke="#a3adba"/><rect x="2.200" y="3" width="7.600" height="9.800" fill="url(#gTi)"/><rect x="10.500" y="3" width="5" height="9.800" fill="#e6e6e6"/><rect x="16" y="3" width="1.400" height="6" fill="#4a9a6a"/></svg>
<div class="d" style="left:36px;top:8px;font-size:14.200px;line-height:20px;color:#8a8a8a;white-space:nowrap">المرتجع من فاتورة</div>
<div class="d" style="left:12px;top:31px;width:135px;height:4px;background:#ff0000"></div>
<div class="d" style="left:1232px;top:16px;width:12px;height:1px;background:#7d7d7d"></div>
<svg class="d" style="left:1290px;top:11px" width="12" height="12" viewBox="0 0 12 12"><rect x=".5" y=".5" width="11" height="11" rx="1.800" fill="none" stroke="#7d7d7d"/></svg>
<svg class="d" style="left:1349px;top:11px" width="12" height="12" viewBox="0 0 12 12"><path d="M.3.300l11.400 11.400M11.700.300L.3 11.700" stroke="#7d7d7d" stroke-width="1.050"/></svg>

<div class="bar" style="left:752px;top:41px;width:616px">خيارات البحث</div>
<div class="lbl" style="left:1251px;top:70px">خيارات المرتجع</div>
<div class="lbl" style="left:1251px;top:104px">نمط الفاتورة</div>
<div class="lbl" style="left:1251px;top:138px">نمط فاتورة المرتجع</div>
<div class="lbl" style="left:1251px;top:172px">تاريخ الفاتورة</div>
<div class="lbl" style="left:1251px;top:205px">الفرع</div>
<div class="fld cmb" style="left:1063px;top:69px;width:182px;height:28px;"><svg class="chev" viewBox="0 0 11 7"><path d="M1 1l4.500 4.500L10 1" fill="none" stroke="#3a3a3a" stroke-width="1.150"/></svg><span class="tx">مرتجع من السنة الحالية</span></div>
<div class="fld cmb" style="left:1063px;top:103px;width:182px;height:28px;"><svg class="chev" viewBox="0 0 11 7"><path d="M1 1l4.500 4.500L10 1" fill="none" stroke="#3a3a3a" stroke-width="1.150"/></svg></div>
<div class="fld cmb" style="left:1063px;top:137px;width:182px;height:28px;"><svg class="chev" viewBox="0 0 11 7"><path d="M1 1l4.500 4.500L10 1" fill="none" stroke="#3a3a3a" stroke-width="1.150"/></svg></div>
<div class="fld dis" style="left:1063px;top:171px;width:182px;height:27px;"><svg style="position:absolute;left:3px;top:3px" width="20" height="20" viewBox="0 0 20 20"><rect x=".6" y="2.600" width="18.800" height="16.400" fill="#fdfdfd" stroke="#555" stroke-width="1.200"/><path d="M.6 6.200h18.800" stroke="#555" stroke-width="1.200"/><path d="M5 .4v3.600M15 .4v3.600" stroke="#555" stroke-width="1.300"/><text x="10" y="16.800" font-size="11" font-weight="bold" text-anchor="middle" fill="#1f6fc4" font-family="Liberation Sans,sans-serif">23</text></svg><span class="tx num" style="color:#666;right:2px;letter-spacing:.5px">4-1-2026</span></div>
<div class="fld dis" style="left:1063px;top:204px;width:182px;height:27px;"></div>
<div class="lbl" style="left:959px;top:70px">الملف السابق</div>
<div class="lbl" style="left:959px;top:104px">رقم الفاتورة</div>
<div class="fld dis" style="left:752px;top:69px;width:200px;height:28px;"><svg class="chev" viewBox="0 0 11 7"><path d="M1 1l4.500 4.500L10 1" fill="none" stroke="#a8a8a8" stroke-width="1.150"/></svg></div>
<div class="fld inp" style="left:752px;top:103px;width:200px;height:28px;"><span class="tx num" style="right:6px">0</span></div>
<div class="fld" style="left:752px;top:170px;width:200px;height:26px;border-color:#e0e0e0;border-radius:4px;background:#f9f9f9;color:#8a8a8a;line-height:27px;font-size:13.500px"><span dir="rtl" style="position:absolute;left:70px;width:44px;text-align:center">قراءة...</span><svg style="position:absolute;right:3px;top:5px" width="16" height="14" viewBox="0 0 16 14"><path d="M.8 1.200l6.800 5.800-6.800 5.800zM8 1.200l6.800 5.800L8 12.800z" fill="none" stroke="#a9d4f5" stroke-width="1.100" stroke-linejoin="round"/></svg></div>
<div class="bar" style="left:6px;top:41px;width:722px">بيانات الفاتورة</div>
<div class="lbl" style="left:682px;top:70px">العميل</div>
<div class="lbl" style="left:682px;top:103px">العملة</div>
<div class="lbl" style="left:682px;top:137px">التاريخ</div>
<div class="fld inp" style="left:330px;top:69px;width:344px;height:27px;"><svg style="position:absolute;left:3px;top:2px" width="22" height="22" viewBox="0 0 22 22"><circle cx="13.500" cy="8" r="6" fill="none" stroke="#2a6fb8" stroke-width="1.500"/><path d="M9.300 12.300L1.500 20.500" stroke="#2a6fb8" stroke-width="1.700"/></svg></div>
<div class="fld cmb" style="left:553px;top:102px;width:121px;height:28px;"><svg class="chev" viewBox="0 0 11 7"><path d="M1 1l4.500 4.500L10 1" fill="none" stroke="#3a3a3a" stroke-width="1.150"/></svg><span class="tx">دولار أمريكي</span></div>
<div class="fld inp" style="left:553px;top:136px;width:121px;height:27px;"><svg style="position:absolute;left:3px;top:3px" width="20" height="20" viewBox="0 0 20 20"><rect x=".6" y="2.600" width="18.800" height="16.400" fill="#fdfdfd" stroke="#555" stroke-width="1.200"/><path d="M.6 6.200h18.800" stroke="#555" stroke-width="1.200"/><path d="M5 .4v3.600M15 .4v3.600" stroke="#555" stroke-width="1.300"/><text x="10" y="16.800" font-size="11" font-weight="bold" text-anchor="middle" fill="#1f6fc4" font-family="Liberation Sans,sans-serif">23</text></svg><span class="tx num" style="color:#222;right:2px;letter-spacing:.5px">4-1-2026</span></div>
<div class="lbl" style="left:499px;top:103px">التعادل</div>
<div class="lbl" style="left:499px;top:137px">الدفع</div>
<div class="fld inp" style="left:415px;top:102px;width:77px;height:27px;"><span class="tx num" style="right:5px">510.00000</span></div>
<div class="fld inp" style="left:330px;top:102px;width:77px;height:27px;"><span class="tx num" style="right:5px">0.00196</span></div>
<div class="fld cmb" style="left:330px;top:135px;width:162px;height:28px;"><svg class="chev" viewBox="0 0 11 7"><path d="M1 1l4.500 4.500L10 1" fill="none" stroke="#3a3a3a" stroke-width="1.150"/></svg><span class="tx">آجل</span></div>
<div class="lbl" style="left:230px;top:70px">المستودع</div>
<div class="lbl" style="left:230px;top:103px">حساب العميل</div>
<div class="lbl" style="left:230px;top:169px">الفرع</div>
<div class="fld dis" style="left:6px;top:69px;width:217px;height:27px;"><span style="position:absolute;right:3px;top:2px;width:21px;height:20px;background:#0672c8;color:#fff;border-radius:2px;text-align:center;line-height:20px;font-size:14px">1</span><span class="tx" style="right:32px;color:#111">مستودع 1</span></div>
<div class="fld inp" style="left:6px;top:102px;width:217px;height:27px;"><svg style="position:absolute;left:3px;top:2px" width="22" height="22" viewBox="0 0 22 22"><circle cx="13.500" cy="8" r="6" fill="none" stroke="#2a6fb8" stroke-width="1.500"/><path d="M9.300 12.300L1.500 20.500" stroke="#2a6fb8" stroke-width="1.700"/></svg><span style="position:absolute;left:26px;right:0;top:1px;text-align:center;color:#c4c4c4">تفصيلية</span></div>
<div class="fld dis" style="left:6px;top:168px;width:217px;height:27px;"></div>
<div class="lbl" style="left:623px;top:203px">البيان</div>
<div class="fld inp" style="left:6px;top:202px;width:609px;height:27px;"></div>
<div class="grid" style="left:6px;top:268px;width:1374px;height:194px">
<div style="position:absolute;left:1354px;top:0;width:20px;height:194px;background:#f1f1f1"></div>
<div style="position:absolute;left:1362px;top:21px;width:3px;height:21px;border-radius:2px;background:#8a8a8a"></div>
<div class="gh" style="left:1083px;width:220px"><span>المادة</span></div>
<div class="gh" style="left:1002px;width:81px"><span>صافي المبيعات</span></div>
<div class="gh" style="left:900px;width:102px"><span>كمية المرتجع</span></div>
<div class="gh" style="left:793px;width:107px"><span>الوحدة</span></div>
<div class="gh" style="left:686px;width:107px"><span>الإفرادي</span></div>
<div class="gh" style="left:636px;width:50px"><span>الإجمالي</span></div>
<div class="gh" style="left:478px;width:158px"><span>هدايا</span></div>
<div class="gh" style="left:429px;width:49px"><span>المركب</span></div>
<div class="gh" style="left:378px;width:51px"><span>حسم %</span></div>
<div class="gh" style="left:343px;width:35px"><span>حسم</span></div>
<div class="gh" style="left:308px;width:35px"><span>إضافة %</span></div>
<div class="gh" style="left:215px;width:93px"><span>إضافة</span></div>
<div style="position:absolute;left:1303px;top:0;width:1px;height:29px;background:#d0d0d0"></div>
<div style="position:absolute;left:215px;top:29px;width:1089px;height:29px;background:#fbfaf3;border-top:1px solid #a8a8a8"></div>
<div class="rn" style="left:1303px;top:29px">1</div>
<div style="position:absolute;left:215px;top:58px;width:1089px;height:29px;background:#c8c793;border-top:1px solid #a8a8a8"></div>
<div class="rn" style="left:1303px;top:58px">2</div>
<div style="position:absolute;left:215px;top:87px;width:1089px;height:29px;background:#fbfaf3;border-top:1px solid #a8a8a8"></div>
<div class="rn" style="left:1303px;top:87px">3</div>
<div style="position:absolute;left:215px;top:116px;width:1089px;height:29px;background:#c8c793;border-top:1px solid #a8a8a8"></div>
<div class="rn" style="left:1303px;top:116px">4</div>
<div style="position:absolute;left:215px;top:145px;width:1089px;height:29px;background:#fbfaf3;border-top:1px solid #a8a8a8"></div>
<div class="rn" style="left:1303px;top:145px">5</div>
<div style="position:absolute;left:215px;top:174px;width:1089px;height:29px;background:#c8c793;border-top:1px solid #a8a8a8"></div>
<div class="rn" style="left:1303px;top:174px">6</div>
<div style="position:absolute;left:215px;top:29px;width:1px;height:170px;background:#a8a8a8"></div>
<div style="position:absolute;left:308px;top:29px;width:1px;height:170px;background:#a8a8a8"></div>
<div style="position:absolute;left:343px;top:29px;width:1px;height:170px;background:#a8a8a8"></div>
<div style="position:absolute;left:378px;top:29px;width:1px;height:170px;background:#a8a8a8"></div>
<div style="position:absolute;left:429px;top:29px;width:1px;height:170px;background:#a8a8a8"></div>
<div style="position:absolute;left:478px;top:29px;width:1px;height:170px;background:#a8a8a8"></div>
<div style="position:absolute;left:636px;top:29px;width:1px;height:170px;background:#a8a8a8"></div>
<div style="position:absolute;left:686px;top:29px;width:1px;height:170px;background:#a8a8a8"></div>
<div style="position:absolute;left:793px;top:29px;width:1px;height:170px;background:#a8a8a8"></div>
<div style="position:absolute;left:900px;top:29px;width:1px;height:170px;background:#a8a8a8"></div>
<div style="position:absolute;left:1002px;top:29px;width:1px;height:170px;background:#a8a8a8"></div>
<div style="position:absolute;left:1083px;top:29px;width:1px;height:170px;background:#a8a8a8"></div>
<div style="position:absolute;left:1303px;top:29px;width:1px;height:170px;background:#a8a8a8"></div>
<div style="position:absolute;left:1083px;top:29px;width:220px;height:30px;border:1px solid #1a73c9"></div>
</div>
<div class="grid" style="left:600px;top:469px;width:779px;height:80px;background:#fdfdfd">
<div class="gh" style="left:550px;width:177px;height:30px;line-height:29px"><span>الحساب</span></div>
<div class="gh" style="left:418px;width:132px;height:30px;line-height:29px"><span>الزبون</span></div>
<div class="gh" style="left:286px;width:132px;height:30px;line-height:29px"><span>الحسم</span></div>
<div class="gh" style="left:154px;width:132px;height:30px;line-height:29px"><span>حسم %</span></div>
<div class="gh" style="left:22px;width:132px;height:30px;line-height:29px"><span>الإضافات</span></div>
<div style="position:absolute;left:727px;top:0;width:1px;height:30px;background:#d0d0d0"></div>
<svg style="position:absolute;left:3px;top:11px" width="7" height="8" viewBox="0 0 7 8"><path d="M6.500 .5v7L.5 4z" fill="#e02020"/></svg>
<div style="position:absolute;left:0;top:29px;width:728px;height:29px;background:#f7faf5;border-top:1px solid #a8a8a8"></div>
<div class="rn" style="left:727px;top:29px;width:51px">1</div>
<div style="position:absolute;left:0;top:58px;width:728px;height:22px;background:#99d9a8;border-top:1px solid #a8a8a8"></div>
<div class="rn" style="left:727px;top:58px;width:51px">2</div>
<div style="position:absolute;left:22px;top:29px;width:1px;height:60px;background:#a8a8a8"></div>
<div style="position:absolute;left:154px;top:29px;width:1px;height:60px;background:#a8a8a8"></div>
<div style="position:absolute;left:286px;top:29px;width:1px;height:60px;background:#a8a8a8"></div>
<div style="position:absolute;left:418px;top:29px;width:1px;height:60px;background:#a8a8a8"></div>
<div style="position:absolute;left:550px;top:29px;width:1px;height:60px;background:#a8a8a8"></div>
<div style="position:absolute;left:727px;top:29px;width:1px;height:60px;background:#a8a8a8"></div>
<div style="position:absolute;left:550px;top:29px;width:177px;height:30px;border:1px solid #1a73c9"></div>
<div class="acc" style="right:58px;top:31px"><b style="width:29px">43</b><span>الحسم الممنوح</span></div>
<div class="acc" style="right:58px;top:61px"><b style="width:38px">601</b><span>ايرادات مختلفة</span></div>
</div>
<div style="position:absolute;left:1378px;top:469px;width:7px;height:80px;background:#efefef"></div>
<div style="position:absolute;left:6px;top:469px;width:94px;height:75px;border-radius:4px;background:#e1e9f3"><span style="position:absolute;left:4px;bottom:2px;font-size:14px;line-height:18px;color:#6b6b6b;white-space:nowrap">رقم السند</span></div>
<div style="position:absolute;left:6px;top:555px;width:1373px;height:1px;background:#b5b5b5"></div>
<div style="position:absolute;left:6px;top:649px;width:1373px;height:1px;background:#b5b5b5"></div>
<div class="card" style="left:746px;width:94px;background:#9aacc6;color:#fff"><span class="v" style="">0.00</span><span class="t">حسم هدايا</span></div>
<div class="card" style="left:645px;width:94px;background:#e1eaf5;color:#4b5a75"><span class="v" style="">0.00</span><span class="t" style="font-size:14.500px">إضافات الأقلام</span></div>
<div class="card" style="left:544px;width:94px;background:#9aacc6;color:#fff"><span class="v" style="">0.00</span><span class="t">حسم الأقلام</span></div>
<div class="card" style="left:424px;width:113px;background:#8c8c8c;color:#fff"><span class="v" style="">0.00</span><span class="t">المجموع</span></div>
<div class="card" style="left:6px;width:411px;background:#0a92de;color:#fff"><span class="v" style="font-size:45px;line-height:52px;top:1px;right:4px;letter-spacing:.5px">0.00</span><span class="t">النهائي</span></div>
<div class="btn" style="left:1100px"><svg viewBox="0 0 18 18"><path d="M1.500 1.500h12l3 3v12h-15z" fill="none" stroke="#f0a8e0" stroke-width="1.200"/><path d="M4.500 1.500v5h8v-5M4 16v-6h6" fill="none" stroke="#f0a8e0" stroke-width="1.100"/><circle cx="13" cy="13.500" r="3.400" fill="#eafbe8" stroke="#a6e2a0" stroke-width="1.100"/></svg><span style="padding-right:16px">إضافة</span></div>
<div class="btn en" style="left:964px"><svg viewBox="0 0 18 18"><path d="M5 4.500h6l4 4v8.500H5z" fill="#fff" stroke="#333" stroke-width="1.200"/><path d="M11 4.500v4h4" fill="none" stroke="#333" stroke-width="1.100"/><path d="M4.500 .5v8M.5 4.500h8M1.700 1.700l5.600 5.600M7.300 1.700L1.700 7.300" stroke="#f08a1d" stroke-width="1.200"/></svg><span style="padding-right:16px">جديد</span></div>
<div class="btn" style="left:828px"><svg viewBox="0 0 18 18"><path d="M1.500 1.500h12l3 3v12h-15z" fill="none" stroke="#f5d78a" stroke-width="1.200"/><path d="M4.500 1.500v5h8v-5" fill="none" stroke="#f5d78a" stroke-width="1.100"/><path d="M6 16l1-3.500L14.500 5l2.500 2.500L9.500 15z" fill="#d6ecfb" stroke="#9fcdf0" stroke-width="1"/></svg><span style="padding-right:16px">تعديل</span></div>
<div class="btn" style="left:693px"><svg viewBox="0 0 18 18"><path d="M4 5l1 11.500h8L14 5M2.500 4.500h13M6.500 4V2h5v2M7 7.500v7M9 7.500v7M11 7.500v7" fill="none" stroke="#f4b4b0" stroke-width="1.200"/></svg><span style="padding-right:16px">حذف</span></div>
<div class="btn" style="left:557px"><span style="">إرجاع الكل</span></div>
<div class="btn" style="left:421px"><span style="">مزيد</span></div>
<div class="btn" style="left:285px"><span style="">الفاتورة الأصلية</span></div>
<div class="btn en" style="left:6px"><svg viewBox="0 0 18 18"><rect x="1.500" y="1.500" width="15" height="15" fill="#fff" stroke="#333" stroke-width="1.100"/><path d="M4.500 4.500l9 9M13.500 4.500l-9 9" stroke="#e03030" stroke-width="1.300"/></svg><span style="padding-right:16px">إغلاق</span></div>
</div>
</body>
</html>
